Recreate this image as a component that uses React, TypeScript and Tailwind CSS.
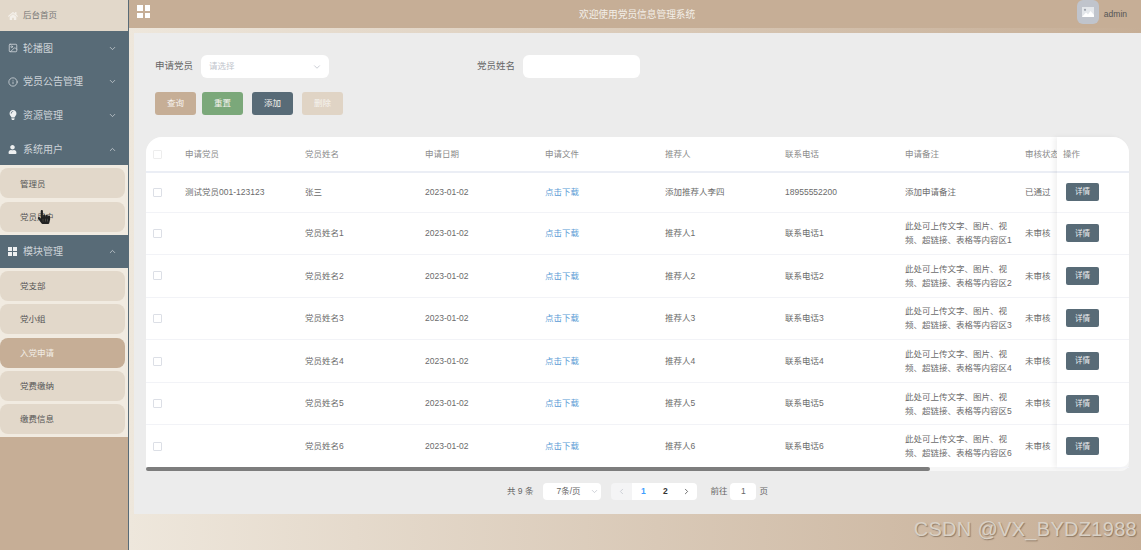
import { ChevronDown, ChevronLeft, ChevronRight, ChevronUp, Image, Info } from "lucide-react";
import { FaHandPointer, FaHome, FaLightbulb, FaUser } from "react-icons/fa";

const headers = ["申请党员", "党员姓名", "申请日期", "申请文件", "推荐人", "联系电话", "申请备注", "审核状态"];

const rows = [
  { applicant: "测试党员001-123123", name: "张三", referrer: "添加推荐人李四", phone: "18955552200", note: "添加申请备注", status: "已通过" },
  ...[1, 2, 3, 4, 5, 6].map((n) => ({
    applicant: "",
    name: `党员姓名${n}`,
    referrer: `推荐人${n}`,
    phone: `联系电话${n}`,
    note: `此处可上传文字、图片、视频、超链接、表格等内容区${n}`,
    status: "未审核",
  })),
];

function Squares({ className }: { className: string }) {
  return (
    <div className={`grid grid-cols-2 ${className}`}>
      <span className="bg-current" />
      <span className="bg-current" />
      <span className="bg-current" />
      <span className="bg-current" />
    </div>
  );
}

function MenuHead({ icon, label, open }: { icon: React.ReactNode; label: string; open?: boolean }) {
  return (
    <div className="flex h-[33.6px] items-center bg-[#586b77] pt-[1px] pl-2 pr-[11px] text-[10px] text-[#cdd3d7]">
      <span className="flex w-[15px] shrink-0 items-center">{icon}</span>
      <span className="flex-1">{label}</span>
      {open ? <ChevronUp size={9} /> : <ChevronDown size={9} />}
    </div>
  );
}

function SubMenu({ items, active }: { items: string[]; active?: string }) {
  return (
    <div className="flex flex-col gap-[3.2px] bg-[#f1ebe1] py-[3px] pr-[3px]">
      {items.map((item) => (
        <div
          key={item}
          className={`flex h-[30px] items-center rounded-lg pt-[1px] pl-5 text-[8.5px] ${
            item === active ? "bg-[#c6ae96] text-[#f3eee8]" : "bg-[#e2d8ca] text-[#555]"
          }`}
        >
          {item}
        </div>
      ))}
    </div>
  );
}

function Sidebar() {
  return (
    <aside className="relative w-[129px] shrink-0 border-r border-[#586b77] bg-[#c6ae96]">
      <div className="flex h-[31px] items-center gap-[5px] bg-[#e2d8ca] pl-2 text-[8.5px] text-[#777]">
        <FaHome size={10} className="text-[#f4f0ea]" />
        后台首页
      </div>
      <MenuHead icon={<Image size={10} />} label="轮播图" />
      <MenuHead icon={<Info size={10} />} label="党员公告管理" />
      <MenuHead icon={<FaLightbulb size={10} className="text-[#eef0f1]" />} label="资源管理" />
      <MenuHead icon={<FaUser size={9} className="text-[#eef0f1]" />} label="系统用户" open />
      <SubMenu items={["管理员", "党员用户"]} />
      <MenuHead icon={<Squares className="size-[9px] gap-px text-[#eef0f1]" />} label="模块管理" open />
      <SubMenu items={["党支部", "党小组", "入党申请", "党费缴纳", "缴费信息"]} active="入党申请" />
      {/* mouse pointer caught in the screenshot */}
      <FaHandPointer size={14} className="absolute left-[37px] top-[210px] text-[#222]" />
    </aside>
  );
}

function Filters() {
  return (
    <div className="pl-[9px] text-[9.5px] text-[#666]">
      <div className="flex h-[23px] items-center">
        <span className="w-[46px]">申请党员</span>
        <div className="flex h-[23px] w-[128px] items-center justify-between rounded-md bg-white pl-2 pr-[7px] text-[8.5px] text-[#c0c4cc]">
          请选择
          <ChevronDown size={10} />
        </div>
        <span className="ml-[148px] w-[46px]">党员姓名</span>
        <div className="h-[23px] w-[117px] rounded-md bg-white" />
      </div>
      <div className="mt-[14px] flex text-[8.5px] text-[#f6f3ef]">
        <div className="flex h-[23px] w-[41px] items-center justify-center rounded-[3px] bg-[#c6ae96]">查询</div>
        <div className="ml-[6px] flex h-[23px] w-[41px] items-center justify-center rounded-[3px] bg-[#7ba87a]">重置</div>
        <div className="ml-[9px] flex h-[23px] w-[41px] items-center justify-center rounded-[3px] bg-[#586b77]">添加</div>
        <div className="ml-[9px] flex h-[23px] w-[41px] items-center justify-center rounded-[3px] bg-[#e0d4c5]">删除</div>
      </div>
    </div>
  );
}

function Checkbox({ className }: { className: string }) {
  return <span className={`block size-[9px] rounded-[1px] border bg-white ${className}`} />;
}

function Table() {
  return (
    <div className="relative mt-[22px] mr-[12px] flex h-[334px] rounded-t-2xl rounded-b-lg bg-[#f6f6f6] text-[8.5px] text-[#6b6b6b]">
      <div className="h-[330px] min-w-0 flex-1 overflow-hidden rounded-tl-2xl bg-white">
        <div className="flex h-[35.5px] w-[987px] items-center border-b-2 border-[#ebeef5] pt-[2px] text-[#8a8a8a]">
          <div className="w-[27px] pl-[7px]">
            <Checkbox className="border-[#ededed]" />
          </div>
          {headers.map((h) => (
            <div key={h} className="w-[120px] pl-3 whitespace-nowrap">
              {h}
            </div>
          ))}
        </div>
        {rows.map((row, i) => (
          <div key={i} className={`flex w-[987px] items-center border-b border-[#f2f3f7] ${i === 0 ? "h-10" : "h-[42.6px]"}`}>
            <div className="w-[27px] pl-[7px]">
              <Checkbox className="border-[#dcdfe6]" />
            </div>
            <div className="w-[120px] pl-3 whitespace-nowrap">{row.applicant}</div>
            <div className="w-[120px] pl-3">{row.name}</div>
            <div className="w-[120px] pl-3">2023-01-02</div>
            <div className="w-[120px] pl-3 text-[#5a9bd5]">点击下载</div>
            <div className="w-[120px] pl-3">{row.referrer}</div>
            <div className="w-[120px] pl-3">{row.phone}</div>
            <div className="w-[120px] pl-3 leading-[14px]">{row.note}</div>
            <div className="w-[120px] pl-3">{row.status}</div>
          </div>
        ))}
      </div>
      <div className="h-[330px] w-[72px] shrink-0 rounded-tr-2xl rounded-br-lg bg-white shadow-[-3px_0_5px_rgba(0,0,0,0.06)]">
        <div className="flex h-[35.5px] items-center border-b-2 border-[#ebeef5] pt-[2px] pl-[6px] text-[#8a8a8a]">操作</div>
        {rows.map((_, i) => (
          <div key={i} className={`flex items-center border-b border-[#f2f3f7] pl-[9px] ${i === 0 ? "h-10" : "h-[42.6px]"}`}>
            <div className="flex h-[18px] w-[33px] items-center justify-center rounded-[2px] bg-[#586b77] text-[7.5px] text-[#eef0f1]">
              详情
            </div>
          </div>
        ))}
      </div>
      {/* horizontal scrollbar thumb */}
      <div className="absolute bottom-0 left-0 h-1 w-[784px] rounded-full bg-[#7d7d7d]" />
    </div>
  );
}

function Pagination() {
  return (
    <div className="mt-3 mr-[12px] flex h-[17px] items-center justify-center text-[8.5px] text-[#666]">
      <span>共 9 条</span>
      <div className="ml-[10px] flex h-[17px] w-[58px] items-center justify-between rounded-sm bg-white pr-[2px] pl-[13px]">
        7条/页
        <ChevronDown size={9} className="text-[#c0c4cc]" />
      </div>
      <div className="ml-[10px] flex h-[17px] w-[21px] items-center justify-center rounded-l-sm bg-[#f4f4f5] text-[#c0c4cc]">
        <ChevronLeft size={9} />
      </div>
      <div className="flex h-[17px] w-[22px] items-center justify-center bg-white font-bold text-[#409eff]">1</div>
      <div className="flex h-[17px] w-[22px] items-center justify-center bg-white font-bold text-[#333]">2</div>
      <div className="flex h-[17px] w-[21px] items-center justify-center rounded-r-sm bg-white text-[#444]">
        <ChevronRight size={9} />
      </div>
      <span className="ml-[13px]">前往</span>
      <div className="mx-[3px] flex h-[17px] w-[26px] items-center justify-center rounded-sm bg-white">1</div>
      <span>页</span>
    </div>
  );
}

export default function App() {
  return (
    <div className="relative flex h-[550px] w-[1141px] overflow-hidden font-['Liberation_Sans','Noto_Sans_CJK_SC',sans-serif]">
      <Sidebar />
      <main className="flex min-w-0 flex-1 flex-col bg-gradient-to-r from-[#eee7dc] to-[#c6ae96]">
        <header className="flex h-7 shrink-0 items-start bg-[#c6ae96] pr-[14px] pl-2">
          <Squares className="mt-[5px] size-[13px] gap-[2px] text-white" />
          <span className="ml-[429px] mt-[8px] text-[9.7px] text-[#f3eee8]">欢迎使用党员信息管理系统</span>
          <div className="ml-auto flex gap-[5px] text-[8.5px] text-[#555]">
            <div className="flex h-6 w-[22px] items-center justify-center rounded-md bg-[#c0c4cc]">
              <svg viewBox="0 0 12 10" className="h-[10px] w-3">
                <rect width="12" height="10" fill="#e4e7eb" />
                <circle cx="3" cy="2.8" r="1.1" fill="#9aa0aa" />
                <path d="M0 10 L4 5.5 L6 7.5 L8.5 4 L12 8 V10 Z" fill="#fff" />
              </svg>
            </div>
            <span className="mt-[8px]">admin</span>
          </div>
        </header>
        <div className="mt-[5px] ml-[5px] h-[481px] shrink-0 bg-[#ececec] pt-[22px] pl-[12px]">
          <Filters />
          <Table />
          <Pagination />
        </div>
      </main>
      {/* CSDN watermark */}
      <span className="absolute right-[4px] bottom-[9px] text-[20px] leading-6 tracking-[0.3px] text-[#d9d1c6] [text-shadow:1px_1px_1px_rgba(90,70,50,0.5)]">
        CSDN @VX_BYDZ1988
      </span>
    </div>
  );
}
